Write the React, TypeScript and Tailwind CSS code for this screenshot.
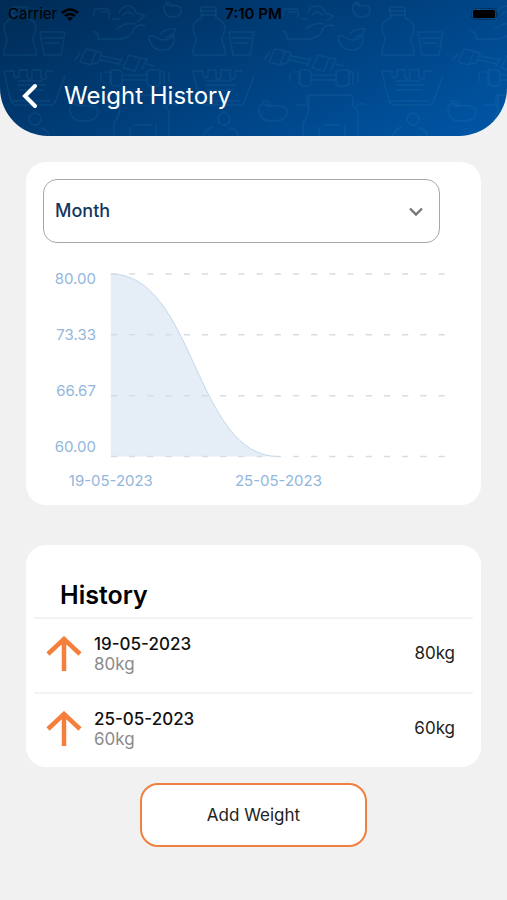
import React, { useState } from "react";

interface WeightEntry {
  id: number;
  date: string;
  weight: number;
}

const entries: WeightEntry[] = [
  { id: 1, date: "19-05-2023", weight: 80 },
  { id: 2, date: "25-05-2023", weight: 60 },
];

const gridLines = [
  { label: "80.00", y: 14, labelY: 24 },
  { label: "73.33", y: 75, labelY: 80 },
  { label: "66.67", y: 136, labelY: 136 },
  { label: "60.00", y: 197, labelY: 192 },
];

function HeaderPattern() {
  return (
    <svg className="absolute inset-0 h-full w-full" aria-hidden="true">
      <defs>
        <pattern
          id="food"
          x="3"
          y="0"
          width="189"
          height="136"
          patternUnits="userSpaceOnUse"
        >
          <g
            fill="none"
            stroke="#3f8fc4"
            strokeOpacity="0.13"
            strokeWidth="1.4"
            strokeLinecap="round"
            strokeLinejoin="round"
          >
            {/* bottle and cup */}
            <rect x="9" y="7" width="15" height="8" rx="2" />
            <path d="M9 11h15M10 15v3C4 20 1 24 1 29c0 4 3 6 3 10 0 5-3 8-3 12v4h32v-4c0-4-3-7-3-12 0-4 3-6 3-10 0-5-3-9-9-11v-3" />
            <path d="M37 32h25l-4 23H41zM40 38h19M42 43h14" />
            {/* meat, arm and shaker */}
            <path d="M91 16v-5q0-2 3-2h9q3 0 3 3v6M97 12h7M116 13q2-7 9-7t8 7l9 3-7 5M120 15q5-6 10 0M116 19h-6" />
            <path d="M90 31q6 2 5 8h21q12-1 15-10 4-6 11-3M114 29q8-7 18-5" />
            {/* fruit */}
            <path d="M168 6q-9-5-7 4 2 7 8 7 9 0 9-6 0-7-10-5zm0 0q-4-1-5-4 5 0 5 4z" />
            <path d="M146 39q-1-6 8-1 9 5 17-3 1 13-9 15-13 1-16-11zM158 34q4-6 15-5-3 7-10 8" />
            <path d="M79 106q-13-6-12 5 2 10 11 10h7q10-1 10-10-2-7-16-5zm0 0q-1-6-8-5 1 6 8 5z" />
            {/* dumbbells */}
            <path d="M83 49l10 2-5 14-11-3zM93 51l6 2-4 10-6 1M77 53l-5 7M99 56l20 4M97 60l20 4M126 55l11 3-5 13-12-3zM137 58l7 1-5 10M119 58l-4 8M144 64l7 2" />
            <path d="M108 70h7q4 0 4 4v8q0 4-4 4h-3q-4 0-4-4zM102 72h5v12M98 73v8M119 75h25M119 80h25M144 74q0-4 4-4h9v12q0 4-4 4h-5q-4 0-4-4zM157 72h4v12M166 73v9" />
            {/* lunch box */}
            <path d="M1 71h10v5q2 4 5 0v-6h8v8q3 3 5 0v-8h9v8q3 3 5 0v-7h7M1 72l7 30 4 3h38l3-5 9-24M9 101h38M15 81h24M15 85h28M16 90h25" />
            {/* scale, bottom row */}
            <path d="M117 95h41q3 0 3 5v6l5 5v25M117 95q-5 7 0 14-2 9-6 14v13M117 95v12M105 105h8M174 105q-6-3-10 1M132 125h16M127 128v8M153 125v11" />
            <circle cx="32" cy="119" r="6" />
            <path d="M20 127q-7 3-8 9M38 128q8 2 8 8" />
          </g>
        </pattern>
      </defs>
      <rect width="100%" height="100%" fill="url(#food)" />
    </svg>
  );
}

function StatusBar() {
  return (
    <div className="relative grid h-7 grid-cols-3 items-center px-2 text-[15px] text-black">
      <div className="flex items-center gap-1">
        <span>Carrier</span>
        <svg width="18" height="13" viewBox="0 0 18 13" aria-hidden="true">
          <g fill="none" stroke="#000" strokeWidth="2.6">
            <path d="M1 5q8-7 16 0" />
            <path d="M4 8q5-4 10 0" />
          </g>
          <path d="M6 10q3-2 6 0l-3 3z" />
        </svg>
      </div>
      <span className="text-center font-semibold">7:10 PM</span>
      <svg
        className="justify-self-end"
        width="28"
        height="12"
        viewBox="0 0 28 12"
        aria-hidden="true"
      >
        <rect
          x="0.5"
          y="0.5"
          width="25"
          height="11"
          rx="3"
          fill="none"
          stroke="#000"
          strokeOpacity="0.3"
        />
        <rect x="2" y="2" width="22" height="8" rx="1.5" />
        <path d="M26.5 4v4q1.5-2 0-4z" fillOpacity="0.4" />
      </svg>
    </div>
  );
}

function WeightChart() {
  return (
    <svg
      className="mt-[17px] block w-full"
      viewBox="0 0 422 232"
      role="img"
      aria-label="Weight"
    >
      <path d="M68 14C152 14 152 197 236 197H68z" fill="#e5edf6" />
      <path
        d="M68 14C152 14 152 197 236 197"
        fill="none"
        stroke="#c3d6e9"
        strokeWidth="1"
      />
      {gridLines.map((line) => (
        <g key={line.label}>
          <line
            x1="68"
            x2="404"
            y1={line.y}
            y2={line.y}
            stroke="#d5dde4"
            strokeWidth="1.5"
            strokeDasharray="6.2 12.05"
          />
          <text
            x="53"
            y={line.labelY}
            textAnchor="end"
            fontSize="15"
            fill="#92b6dc"
          >
            {line.label}
          </text>
        </g>
      ))}
      {entries.map((entry, index) => (
        <text
          key={entry.id}
          x={68 + index * 168}
          y="227"
          textAnchor="middle"
          fontSize="15"
          fill="#92b6dc"
        >
          {entry.date}
        </text>
      ))}
    </svg>
  );
}

function App() {
  const [period, setPeriod] = useState("Month");

  return (
    <div className="min-h-screen bg-[#f1f1f1] pb-12 font-[Inter,sans-serif]">
      <header className="relative overflow-hidden rounded-b-[48px] bg-linear-155 from-[#002b55] via-[#00407d] to-[#0057a8] pb-5">
        <HeaderPattern />
        <StatusBar />
        <div className="relative mt-12 flex h-10 items-center gap-6 px-5">
          <button aria-label="Back" className="text-white">
            <svg width="20" height="26" viewBox="0 0 20 26" aria-hidden="true">
              <path
                d="M15 3L5 13l10 10"
                fill="none"
                stroke="currentColor"
                strokeWidth="4"
                strokeLinecap="round"
              />
            </svg>
          </button>
          <h1 className="text-2xl text-white">Weight History</h1>
        </div>
      </header>

      <main className="px-[26px] pt-[26px]">
        <section className="rounded-[20px] bg-white px-[17px] pt-[17px] pb-3.5">
          <div className="relative mr-6">
            <select
              aria-label="Period"
              value={period}
              onChange={(e) => setPeriod(e.target.value)}
              className="h-16 w-full appearance-none rounded-[14px] border border-[#a8a8a8] bg-white px-[11px] text-lg font-medium text-[#14365f]"
            >
              <option>Month</option>
              <option>Week</option>
              <option>Year</option>
            </select>
            <svg
              className="pointer-events-none absolute top-7 right-4"
              width="16"
              height="10"
              viewBox="0 0 16 10"
              aria-hidden="true"
            >
              <path
                d="M2 1.5l6 6 6-6"
                fill="none"
                stroke="#777"
                strokeWidth="2.4"
              />
            </svg>
          </div>
          <WeightChart />
        </section>

        <section className="mt-10 rounded-[20px] bg-white px-2 pt-7">
          <h2 className="h-11 px-[26px] pt-1 text-[25px] leading-9 font-semibold text-black">
            History
          </h2>
          <ul>
            {entries.map((entry) => (
              <li
                key={entry.id}
                className="flex h-[75px] items-center border-t-2 border-[#f3f3f3] pr-[18px] pb-1 pl-3"
              >
                <svg width="36" height="36" viewBox="0 0 36 36" aria-hidden="true">
                  <path
                    d="M18 35V3M2 18L18 3l16 15"
                    fill="none"
                    stroke="#f47f3c"
                    strokeWidth="4.5"
                  />
                </svg>
                <div className="ml-3 flex-1 text-[17px] leading-5">
                  <p className="font-medium text-[#111]">{entry.date}</p>
                  <p className="text-[#8b8b8b]">{entry.weight}kg</p>
                </div>
                <span className="text-[17px] text-[#222]">
                  {entry.weight}kg
                </span>
              </li>
            ))}
          </ul>
        </section>

        <button className="mx-auto mt-4 block h-16 w-1/2 rounded-[18px] border-2 border-[#f08040] bg-white text-[17px] text-[#222]">
          Add Weight
        </button>
      </main>
    </div>
  );
}

export default App;
